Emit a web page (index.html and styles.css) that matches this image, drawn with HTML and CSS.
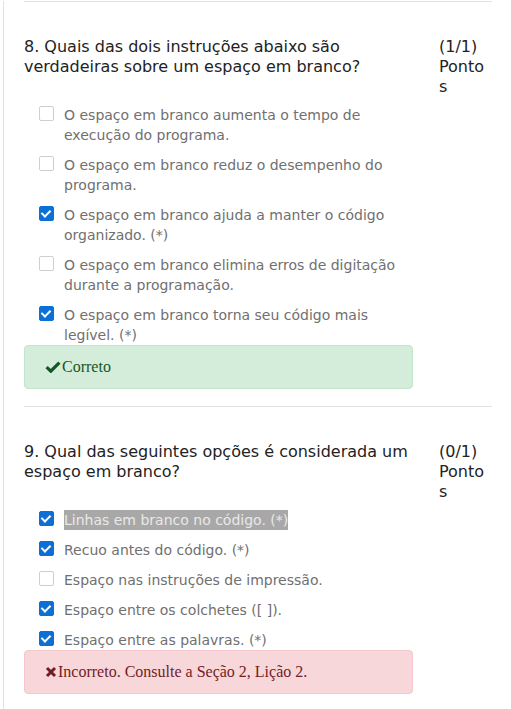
FILE: index.html
```html
<!DOCTYPE html>
<html lang="pt">
<head>
<meta charset="utf-8">
<link rel="stylesheet" href="styles.css">
</head>
<body>
<div class="page">
  <section class="question">
    <div class="q-head">
      <div class="q-text">8. Quais das dois instruções abaixo são verdadeiras sobre um espaço em branco?</div>
      <div class="q-points">(1/1) Pontos</div>
    </div>
    <ul class="options">
      <li class="opt"><span class="box"></span><span class="label">O espaço em branco aumenta o tempo de execução do programa.</span></li>
      <li class="opt"><span class="box"></span><span class="label">O espaço em branco reduz o desempenho do programa.</span></li>
      <li class="opt"><span class="box checked"></span><span class="label">O espaço em branco ajuda a manter o código organizado. (*)</span></li>
      <li class="opt"><span class="box"></span><span class="label">O espaço em branco elimina erros de digitação durante a programação.</span></li>
      <li class="opt"><span class="box checked"></span><span class="label">O espaço em branco torna seu código mais legível. (*)</span></li>
    </ul>
    <div class="alert ok"><svg class="ico" viewBox="0 0 16 12" width="16" height="12"><path d="M1.6 6.2 L5.8 10.2 L14.4 1.6" fill="none" stroke="currentColor" stroke-width="3.2"/></svg>Correto</div>
  </section>
  <section class="question">
    <div class="q-head">
      <div class="q-text">9. Qual das seguintes opções é considerada um espaço em branco?</div>
      <div class="q-points">(0/1) Pontos</div>
    </div>
    <ul class="options">
      <li class="opt"><span class="box checked"></span><span class="label hl">Linhas em branco no código. (*)</span></li>
      <li class="opt"><span class="box checked"></span><span class="label">Recuo antes do código. (*)</span></li>
      <li class="opt"><span class="box"></span><span class="label">Espaço nas instruções de impressão.</span></li>
      <li class="opt"><span class="box checked"></span><span class="label">Espaço entre os colchetes ([ ]).</span></li>
      <li class="opt"><span class="box checked"></span><span class="label">Espaço entre as palavras. (*)</span></li>
    </ul>
    <div class="alert bad"><svg class="ico x" viewBox="0 0 12 12" width="12" height="12"><path d="M2 2 L10 10 M10 2 L2 10" fill="none" stroke="currentColor" stroke-width="3"/></svg>Incorreto. Consulte a Seção 2, Lição 2.</div>
  </section>
</div>
</body>
</html>
```

FILE: styles.css
```css
html, body {
  margin: 0;
  padding: 0;
  background: #fff;
}
.page {
  margin-left: 3px;
  border-left: 1px solid #e2e2e2;
  min-height: 709px;
  padding: 0 19px 0 20px;
  font-family: "DejaVu Sans", Verdana, sans-serif;
}
.question {
  border-top: 1px solid #e3e3e3;
  margin-top: 1px;
  padding-top: 35px;
  padding-bottom: 16px;
}
.q-head {
  display: flex;
  gap: 15px;
  font-size: 16px;
  line-height: 20px;
  color: #222;
}
.q-text {
  flex: 1;
}
.q-points {
  width: 53px;
  overflow-wrap: anywhere;
}
.options {
  list-style: none;
  margin: 8px 0 0 0;
  padding: 0 0 0 15px;
  width: 374px;
  display: flex;
  flex-direction: column;
  gap: 10px;
}
.opt {
  display: flex;
  align-items: flex-start;
  gap: 10px;
  font-size: 14px;
  line-height: 20px;
  color: #707070;
}
.box {
  flex: none;
  width: 13px;
  height: 13px;
  margin-top: 1px;
  border: 1px solid #cfcfcf;
  border-radius: 2px;
  background: #fff;
  position: relative;
}
.box.checked {
  background: #0b6fd6;
  border-color: #0b6fd6;
}
.box.checked::after {
  content: "";
  position: absolute;
  left: 3px;
  top: 1px;
  width: 4px;
  height: 7px;
  border: solid #fff;
  border-width: 0 2px 2px 0;
  transform: rotate(45deg);
}
.label {
  flex: 1;
}
.label.hl {
  flex: none;
  background: #a8a8a8;
  color: #e8e8e8;
}
.alert {
  width: 347px;
  padding: 12px 20px;
  border: 1px solid;
  border-radius: 4px;
  font-family: "Liberation Serif", "Times New Roman", serif;
  font-size: 16px;
  line-height: 18px;
  display: flex;
  align-items: center;
}
.alert.ok {
  background: #d4edda;
  border-color: #c3e6cb;
  color: #155724;
}
.alert.bad {
  background: #f8d7da;
  border-color: #f5c6cb;
  color: #721c24;
}
.ico {
  flex: none;
  margin-right: 1px;
}
.ico.x {
  margin-right: 1px;
}
```
